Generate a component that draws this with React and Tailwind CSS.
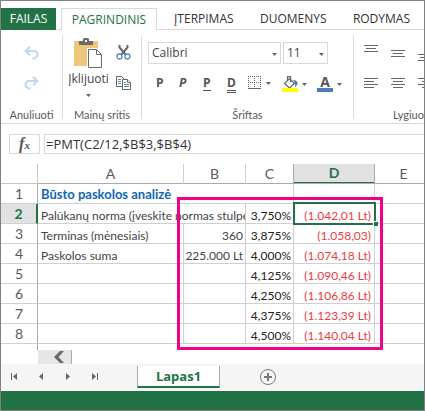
import { clsx } from 'clsx'

const tabs = ['ĮTERPIMAS', 'DUOMENYS', 'RODYMAS']

const rows = [
  { n: 3, a: 'Terminas (mėnesiais)', b: '360', c: '3,875%', d: '(1.058,03)' },
  { n: 4, a: 'Paskolos suma', b: '225.000 Lt', c: '4,000%', d: '(1.074,18 Lt)' },
  { n: 5, a: '', b: '', c: '4,125%', d: '(1.090,46 Lt)' },
  { n: 6, a: '', b: '', c: '4,250%', d: '(1.106,86 Lt)' },
  { n: 7, a: '', b: '', c: '4,375%', d: '(1.123,39 Lt)' },
  { n: 8, a: '', b: '', c: '4,500%', d: '(1.140,04 Lt)' },
]

const Caret = ({ className }) => (
  <svg className={clsx('h-[3px] w-[5px] shrink-0', className)} viewBox="0 0 5 3" fill="#666">
    <path d="M0 0h5L2.5 3z" />
  </svg>
)

const UndoIcon = ({ className }) => (
  <svg className={clsx('h-[14px] w-[15px]', className)} viewBox="0 0 15 14" fill="none" stroke="#c5d6e8" strokeWidth="2">
    <path d="M6 .8L1.6 5 6 9.2M2 5h8a3.500 3.500 0 0 1 3.500 3.500Q13.500 11.500 8.500 12.800" />
  </svg>
)

const PasteIcon = () => (
  <svg className="h-[31px] w-[29px]" viewBox="0 0 29 31">
    <path d="M0 3h24v25H0z" fill="#eec67c" />
    <path d="M5 7V3h4V1.5Q9 0 10.500 0h3Q15 0 15 1.500V3h4v4z" fill="#6a6a6a" />
    <path d="M11 2h2v2h-2z" fill="#fff" />
    <path d="M13 10h10l6 6v15H13z" fill="#fff" />
    <path d="M14.500 11.500h8l5 5v13h-13zM22.500 11.500v5h5" fill="#fff" stroke="#6a6a6a" />
  </svg>
)

const CutIcon = () => (
  <svg className="h-[15px] w-[15px]" viewBox="0 0 15 15" fill="none">
    <path d="M3.500 0v2.500L10 10M11.500 0v2.500L5 10" stroke="#666" strokeWidth="2" />
    <circle cx="3.500" cy="11.500" r="2.500" stroke="#5b8abd" strokeWidth="1.300" />
    <circle cx="11.500" cy="11.500" r="2.500" stroke="#5b8abd" strokeWidth="1.300" />
  </svg>
)

const CopyIcon = () => (
  <svg className="h-[14px] w-[15px]" viewBox="0 0 15 14" fill="#fff">
    <path d="M.5.500h5l3 3v7h-8z" stroke="#666" />
    <path d="M2 3.500h3M2 5.500h3M2 7.500h3" stroke="#5b8abd" />
    <path d="M6.500 3.500h5l3 3v7h-8z" stroke="#666" />
    <path d="M11.500 3.500v3h3" stroke="#666" />
    <path d="M8 6.500h2M8 8.500h5M8 10.500h5" stroke="#5b8abd" />
  </svg>
)

const BordersIcon = () => (
  <svg className="h-[14px] w-[13px]" viewBox="0 0 13 14" fill="none" stroke="#666">
    <path d="M0 .5h13M0 6.500h13M.5 0v13M6.500 0v13M12.500 0v13" strokeDasharray="1 1" />
    <path d="M0 12.500h13" />
  </svg>
)

const FillIcon = () => (
  <svg className="h-4 w-4" viewBox="0 0 16 16" fill="none">
    <path d="M11 4q5 0 4.500 4.500L13 11q.8-4-2-7z" fill="#4a7ebb" />
    <path d="M7.500 2.500l5 5-5 4.500L2.500 7.500z" fill="#fff" stroke="#666" strokeWidth="1.200" />
    <path d="M5.500 5V.600h3V6" stroke="#666" strokeWidth="1.200" />
    <path d="M0 12h16v4H0z" fill="#ff0" />
  </svg>
)

// each entry is [start, end] of a line, 3px apart
const LinesIcon = ({ lines, className }) => (
  <svg className={clsx('h-[17px] w-[14px] shrink-0', className)} viewBox="0 0 14 17" stroke="#666">
    {lines.map(([x1, x2], i) => (
      <path key={i} d={`M${x1} ${i * 3 + 0.5}H${x2}`} />
    ))}
  </svg>
)

const Group = ({ label, className, labelClassName = 'text-center', children }) => (
  <section className={clsx('flex h-[84px] flex-col justify-between', className)}>
    {children}
    <p className={clsx("whitespace-nowrap font-['Lato','Open_Sans',sans-serif] text-[11px] leading-[8px] text-[#5a5a5a]", labelClassName)}>
      {label}
    </p>
  </section>
)

const Ribbon = () => (
  <div className="flex overflow-hidden border-b border-[#d9d9d9] pt-[5px] pb-1">
    <Group label="Anuliuoti" className="w-[62px] shrink-0 border-r border-[#dcdcdc]">
      <div className="flex flex-col items-center gap-4 pt-[11px]">
        <button type="button" aria-label="Anuliuoti">
          <UndoIcon />
        </button>
        <button type="button" aria-label="Perdaryti">
          <UndoIcon className="-scale-x-100" />
        </button>
      </div>
    </Group>

    <Group label="Mainų sritis" className="w-[79px] shrink-0 border-r border-[#dcdcdc]">
      <div className="flex gap-2 pt-[3px] pl-[6px]">
        <button type="button" className="flex w-[39px] flex-col items-center text-[12px] leading-[16px] text-[#444]">
          <PasteIcon />
          <span className="mt-[2px]">Įklijuoti</span>
          <Caret className="mt-[7px]" />
        </button>
        <div className="flex flex-col gap-4 pt-[7px]">
          <button type="button" aria-label="Iškirpti">
            <CutIcon />
          </button>
          <button type="button" aria-label="Kopijuoti">
            <CopyIcon />
          </button>
        </div>
      </div>
    </Group>

    <Group label="Šriftas" className="w-[212px] shrink-0 border-r border-[#dcdcdc]">
      <div className="pt-[7px] pl-[6px]">
        <div className="flex gap-[2px]">
          <div className="relative">
            <select aria-label="Šriftas" className="block h-[22px] w-[133px] appearance-none border border-[#d9d9d9] bg-white pl-[3px] text-[12px] text-[#444]">
              <option>Calibri</option>
            </select>
            <Caret className="pointer-events-none absolute top-[11px] right-1" />
          </div>
          <div className="relative">
            <select aria-label="Šrifto dydis" className="block h-[22px] w-[45px] appearance-none border border-[#d9d9d9] bg-white pl-[3px] text-[12px] text-[#444]">
              <option>11</option>
            </select>
            <Caret className="pointer-events-none absolute top-[11px] right-1" />
          </div>
        </div>
        <div className="mt-3 flex h-4 items-start pl-2 text-[12px] leading-[14px] font-bold text-[#555]">
          <button type="button" className="w-[23px] text-left">P</button>
          <button type="button" className="w-6 text-left italic">P</button>
          <button type="button" className="w-6 text-left">
            <span className="inline-block border-b border-[#555]">P</span>
          </button>
          <button type="button" className="w-[21px] text-left">
            <span className="inline-block border-b-3 border-double border-[#555]">D</span>
          </button>
          <button type="button" aria-label="Kraštinės" className="flex w-[34px] items-center gap-[5px]">
            <BordersIcon />
            <Caret />
          </button>
          <button type="button" aria-label="Užpildo spalva" className="flex w-[35px] items-center gap-1">
            <FillIcon />
            <Caret />
          </button>
          <button type="button" aria-label="Šrifto spalva" className="flex items-center gap-1">
            <span className="h-4 w-4 border-b-4 border-[#4a7ebb] text-center text-[14px] leading-[12px]">A</span>
            <Caret />
          </button>
        </div>
      </div>
    </Group>

    <Group label="Lygiuo" className="min-w-0 flex-1" labelClassName="text-right">
      <div className="flex flex-col gap-[7px] pt-[10px] pl-[10px]">
        <div className="flex gap-[13px]">
          <LinesIcon lines={[[0, 14], [2, 12], [0, 14]]} />
          <LinesIcon lines={[[0, 14], [2, 12], [0, 14]]} className="mt-[5px]" />
          <LinesIcon lines={[[0, 14], [2, 12], [0, 14]]} className="mt-[9px]" />
        </div>
        <div className="flex gap-[13px]">
          <LinesIcon lines={[[0, 14], [0, 10], [0, 14], [0, 10]]} />
          <LinesIcon lines={[[0, 14], [2, 12], [0, 14], [2, 12]]} />
          <LinesIcon lines={[[0, 14], [4, 14], [0, 14], [4, 14]]} />
        </div>
      </div>
    </Group>
  </div>
)

const RowHead = ({ children, active }) => (
  <th
    scope="row"
    className={clsx(
      'border-b border-[#d0d0d0] text-[14px] leading-[18px]',
      active
        ? 'border-r-2 border-r-[#217346] bg-[#e1e1e1] font-bold text-[#217346]'
        : 'border-r border-r-[#ababab] font-normal text-[#5a5a5a]'
    )}
  >
    {children}
  </th>
)

const Cell = ({ className, children, ...rest }) => (
  <td className={clsx('overflow-hidden border-b border-[#d0d0d0] align-bottom whitespace-nowrap', className)} {...rest}>
    {children}
  </td>
)

const Sheet = () => (
  <div className="relative mt-[10px] overflow-hidden">
    <table className="w-full table-fixed border-separate border-spacing-0 font-['Lato','Open_Sans',sans-serif] text-[12px] leading-[15px] text-[#444] [&_td]:h-5 [&_td]:p-0 [&_th]:h-5 [&_th]:p-0">
      <colgroup>
        <col className="w-[37px]" />
        <col className="w-[146px]" />
        <col className="w-[62px]" />
        <col className="w-12" />
        <col className="w-[81px]" />
        <col />
      </colgroup>
      <thead>
        <tr className="text-[14px] leading-[18px] text-[#5a5a5a] [&>th]:border-b [&>th]:border-b-[#ababab] [&>th]:font-normal">
          <td className="border-r border-b border-[#c6c6c6]" />
          <th scope="col" className="border-r border-r-[#d0d0d0]">A</th>
          <th scope="col" className="border-r border-r-[#d0d0d0]">B</th>
          <th scope="col" className="border-r border-r-[#ababab]">C</th>
          <th scope="col" className="border-r border-r-[#ababab] bg-[#e1e1e1]">
            <span className="block border-b border-[#217346] font-bold text-[#217346]">D</span>
          </th>
          <th scope="col"><span className="pl-2">E</span></th>
        </tr>
      </thead>
      <tbody>
        <tr>
          <RowHead>1</RowHead>
          <Cell colSpan={3} className="border-r text-[13px] leading-[18px] font-bold text-[#1068b8]">
            <span className="pl-[3px]">Būsto paskolos analizė</span>
          </Cell>
          <Cell className="border-r" />
          <Cell />
        </tr>
        <tr>
          <RowHead active>2</RowHead>
          <Cell colSpan={2} className="border-r">
            <span className="pl-[3px]">Palūkanų norma (įveskite normas stulpe</span>
          </Cell>
          <Cell className="text-right text-[#222]">
            <span className="pr-[3px]">3,750%</span>
          </Cell>
          <td className="relative border-b border-[#217346] text-right align-bottom text-[#ee3a43]">
            <span className="pr-1">(1.042,01 Lt)</span>
            <div className="absolute -inset-x-px -top-[2px] -bottom-[2px] border-2 border-[#217346]" />
            <div className="absolute -right-[3px] -bottom-[3px] h-[5px] w-[5px] border-t border-l border-white bg-[#217346]" />
          </td>
          <Cell />
        </tr>
        {rows.map((row) => (
          <tr key={row.n}>
            <RowHead>{row.n}</RowHead>
            <Cell className="border-r">
              <span className="pl-[3px]">{row.a}</span>
            </Cell>
            <Cell className="border-r text-right">
              <span className="pr-[2px]">{row.b}</span>
            </Cell>
            <Cell className="border-r text-right text-[#222]">
              <span className="pr-[2px]">{row.c}</span>
            </Cell>
            <Cell className="border-r text-right text-[#ee3a43]">
              <span className="pr-[3px]">{row.d}</span>
            </Cell>
            <Cell />
          </tr>
        ))}
      </tbody>
    </table>
    <div className="h-[6px] w-[37px] border-r border-[#ababab]" />
    {/* highlight around B1:D8 */}
    <div className="pointer-events-none absolute top-[33px] bottom-0 left-[176px] w-[206px] border-3 border-[#ec008c]" />
  </div>
)

const SheetNav = () => (
  <>
    <div className="pl-[37px]">
      <button type="button" aria-label="Slinkti kairėn" className="flex h-[14px] w-[34px] items-center justify-end border-r border-[#ababab] bg-[#e6e6e6] pr-[7px]">
        <svg className="h-[12px] w-[10px]" viewBox="0 0 10 12" fill="#6a6a6a">
          <path d="M6 0h4L4.500 6l5.500 6H6L0 6z" />
        </svg>
      </button>
    </div>
    <div className="flex h-[27px] items-start bg-[#f5f5f5]">
      <div className="flex w-[136px] shrink-0 gap-[21px] pt-[9px] pl-[10px]">
        <button type="button" aria-label="Pirmas lapas">
          <svg className="h-[7px] w-[6px]" viewBox="0 0 6 7" fill="#666"><path d="M0 0h1v7H0zM6 0v7L2 3.500z" /></svg>
        </button>
        <button type="button" aria-label="Ankstesnis lapas">
          <svg className="h-[7px] w-[6px]" viewBox="0 0 6 7" fill="#666"><path d="M5 0v7L1 3.500z" /></svg>
        </button>
        <button type="button" aria-label="Kitas lapas">
          <svg className="h-[7px] w-[6px]" viewBox="0 0 6 7" fill="#666"><path d="M1 0v7l4-3.500z" /></svg>
        </button>
        <button type="button" aria-label="Paskutinis lapas">
          <svg className="h-[7px] w-[6px]" viewBox="0 0 6 7" fill="#666"><path d="M0 0v7l4-3.500zM5 0h1v7H5z" /></svg>
        </button>
      </div>
      <button type="button" className="mt-[2px] h-[22px] w-[83px] border-x border-b-2 border-x-[#ababab] border-b-[#217346] bg-white text-[13px] leading-5 font-bold text-[#217346]">
        Lapas1
      </button>
      <button type="button" aria-label="Naujas lapas" className="mt-[5px] ml-10">
        <svg className="h-4 w-4" viewBox="0 0 16 16" fill="none" stroke="#777">
          <circle cx="8" cy="8" r="7.500" />
          <path d="M8 4v8M4 8h8" strokeWidth="2" />
        </svg>
      </button>
    </div>
  </>
)

const App = () => (
  <div className="overflow-hidden border border-[#808080] bg-white font-['Open_Sans','Noto_Sans',sans-serif]">
    <nav className="flex items-stretch overflow-hidden pt-[7px] text-[12px] leading-[22px] text-[#333]">
      <button type="button" className="h-[22px] w-[55px] shrink-0 bg-[#217346] text-white">FAILAS</button>
      <div className="w-[5px] shrink-0 border-b border-[#d9d9d9]" />
      <button type="button" className="h-[22px] w-24 shrink-0 border-x border-t border-[#d9d9d9] text-[#217346]">PAGRINDINIS</button>
      <div className="flex h-[22px] flex-1 justify-between border-b border-[#d9d9d9] pr-[14px] pl-[17px]">
        {tabs.map((tab) => (
          <button key={tab} type="button">{tab}</button>
        ))}
      </div>
    </nav>
    <Ribbon />
    <div className="mt-[10px] flex gap-1 pl-2">
      <button type="button" aria-label="Įterpti funkciją" className="h-5 w-[31px] shrink-0 border border-[#d9d9d9] font-['Liberation_Serif',serif] text-[16px] leading-[16px] font-bold text-[#555] italic">
        f<span className="text-[11px]">x</span>
      </button>
      <input
        aria-label="Formulė"
        defaultValue="=PMT(C2/12,$B$3,$B$4)"
        className="h-5 min-w-0 flex-1 border border-r-0 border-[#d9d9d9] pl-px text-[13px] text-[#333] outline-none"
      />
    </div>
    <Sheet />
    <SheetNav />
    <footer className="h-[19px] bg-[#217346]" />
  </div>
)

export default App
